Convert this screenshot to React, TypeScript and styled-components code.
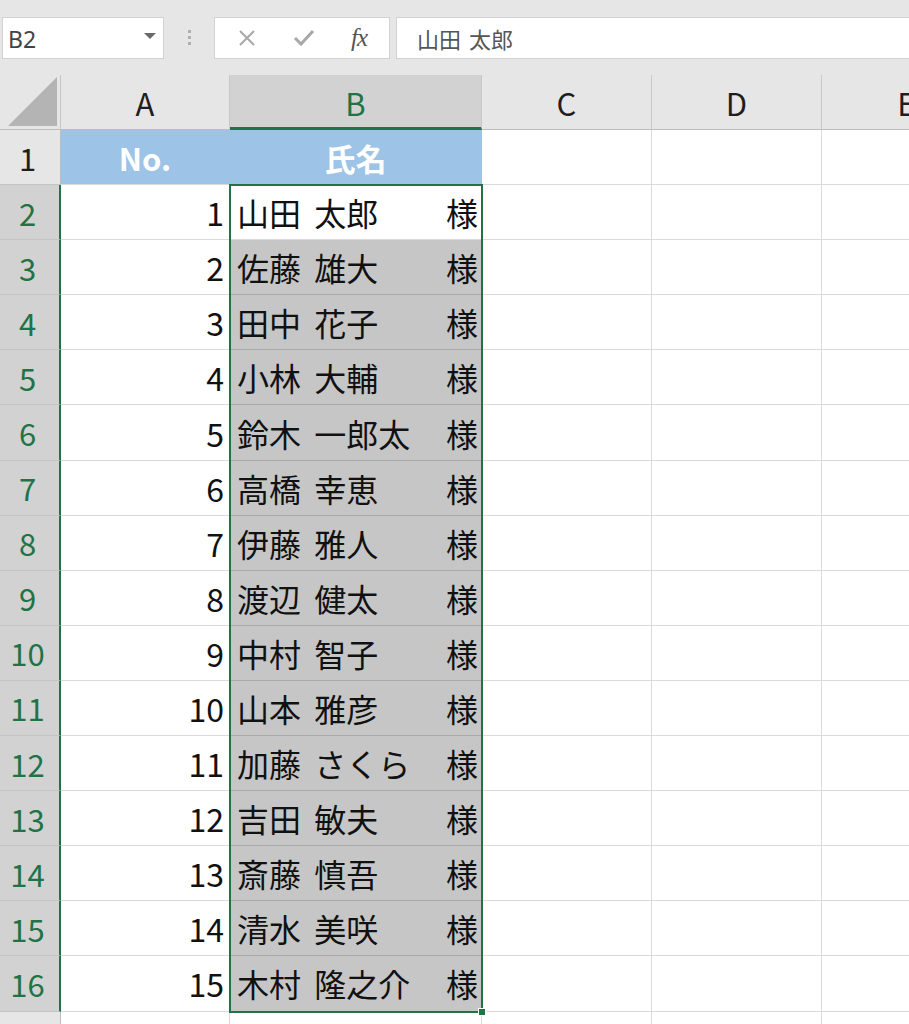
import styled, { createGlobalStyle } from "styled-components";

const GREEN = "#217346";
const FONT = `"Noto Sans CJK JP", "Noto Sans", sans-serif`;
const ROW_H = 55.1;
const HEAD_H = 55;

const names = [
    "山田 太郎",
    "佐藤 雄大",
    "田中 花子",
    "小林 大輔",
    "鈴木 一郎太",
    "高橋 幸恵",
    "伊藤 雅人",
    "渡辺 健太",
    "中村 智子",
    "山本 雅彦",
    "加藤 さくら",
    "吉田 敏夫",
    "斎藤 慎吾",
    "清水 美咲",
    "木村 隆之介",
];

const GlobalStyle = createGlobalStyle`
    html, body {
        margin:0;
        padding:0;
        background:#e6e6e6;
    }
    body {
        font-family:${FONT};
    }
`;

const Page = styled.div`
    width:909px;
    height:1024px;
    overflow:hidden;
    background:#e6e6e6;
`;

/* ---- formula bar ---- */
const Toolbar = styled.div`
    height:75px;
    display:flex;
    align-items:center;
    padding-left:2px;
    box-sizing:border-box;
`;
const NameBox = styled.div`
    width:162px;
    height:42px;
    box-sizing:border-box;
    background:#fff;
    border:1px solid #d2d2d2;
    display:flex;
    align-items:center;
    justify-content:space-between;
    padding:2px 7px 0 5px;
    font-family:"Noto Sans", "Open Sans", sans-serif;
    font-size:23px;
    color:#444;
`;
const Caret = styled.span`
    width:0;
    height:0;
    border-left:6px solid transparent;
    border-right:6px solid transparent;
    border-top:6px solid #6a6a6a;
    margin-top:-6px;
`;
const Grip = styled.div`
    width:50px;
    display:flex;
    flex-direction:column;
    align-items:center;
    gap:3px;
    span {
        width:3px;
        height:3px;
        background:#b0b0b0;
    }
`;
const ButtonBox = styled.div`
    width:176px;
    height:42px;
    box-sizing:border-box;
    background:#fff;
    border:1px solid #d2d2d2;
    display:flex;
    align-items:center;
    justify-content:space-around;
    padding:0 4px;
`;
const Fx = styled.span`
    font-family:"Liberation Serif", serif;
    font-style:italic;
    font-size:25px;
    color:#555;
    letter-spacing:-1px;
`;
const FormulaBox = styled.div`
    flex:1;
    height:42px;
    margin-left:6px;
    margin-right:-4px;
    box-sizing:border-box;
    background:#fff;
    border:1px solid #d2d2d2;
    display:flex;
    align-items:center;
    padding-left:20px;
    font-size:22px;
    color:#555;
    word-spacing:3px;
`;

/* ---- sheet ---- */
const Sheet = styled.div`
    position:relative;
    display:grid;
    grid-template-columns:61px 169px 252px 170px 170px 170px;
    grid-template-rows:${HEAD_H}px;
    grid-auto-rows:${ROW_H}px;
    width:992px;
    background:#fff;
    font-family:${FONT};
`;
const Corner = styled.div`
    background:#e6e6e6;
    border-right:1px solid #c6c6c6;
    border-bottom:1px solid #bdbdbd;
    box-sizing:border-box;
    display:flex;
    align-items:flex-end;
    justify-content:flex-end;
    padding:0 2px 2px 0;
`;
const ColHead = styled.div<{ $selected?: boolean }>`
    box-sizing:border-box;
    background:${(p) => (p.$selected ? "#d2d2d2" : "#e6e6e6")};
    color:${(p) => (p.$selected ? GREEN : "#1e1e1e")};
    border-right:1px solid #c8c8c8;
    border-bottom:${(p) => (p.$selected ? `3px solid ${GREEN}` : "1px solid #bdbdbd")};
    display:flex;
    align-items:center;
    justify-content:center;
    font-size:31px;
    padding-top:${(p) => (p.$selected ? "2px" : "0")};
`;
const RowHead = styled.div<{ $selected?: boolean }>`
    box-sizing:border-box;
    background:${(p) => (p.$selected ? "#d2d2d2" : "#e6e6e6")};
    color:${(p) => (p.$selected ? GREEN : "#1e1e1e")};
    border-right:${(p) => (p.$selected ? `2px solid ${GREEN}` : "1px solid #bdbdbd")};
    border-bottom:1px solid #c4c4c4;
    display:flex;
    align-items:center;
    justify-content:center;
    padding-right:${(p) => (p.$selected ? "4px" : "5px")};
    font-size:31px;
`;
const TitleCell = styled.div`
    box-sizing:border-box;
    background:#9dc3e6;
    border-right:1px solid #9dc3e6;
    border-bottom:1px solid #dadada;
    color:#fff;
    font-weight:700;
    font-size:31px;
    display:flex;
    align-items:center;
    justify-content:center;
`;
const NumCell = styled.div`
    box-sizing:border-box;
    border-right:1px solid #dadada;
    border-bottom:1px solid #dadada;
    display:flex;
    align-items:center;
    justify-content:flex-end;
    padding-right:5px;
    font-size:32px;
    color:#111;
`;
const NameCell = styled.div<{ $selected?: boolean }>`
    box-sizing:border-box;
    background:${(p) => (p.$selected ? "#c6c6c6" : "#fff")};
    border-right:1px solid #dadada;
    border-bottom:1px solid ${(p) => (p.$selected ? "#a9a9a9" : "#dadada")};
    display:flex;
    align-items:center;
    justify-content:space-between;
    padding:0 3px 0 7px;
    font-size:32px;
    color:#111;
    word-spacing:6px;
    white-space:nowrap;
`;
const Cell = styled.div`
    box-sizing:border-box;
    border-right:1px solid #dadada;
    border-bottom:1px solid #dadada;
`;
const Selection = styled.div`
    position:absolute;
    left:229px;
    top:${HEAD_H + ROW_H - 1}px;
    width:254px;
    height:${ROW_H * 15 + 2}px;
    box-sizing:border-box;
    border:2px solid ${GREEN};
    pointer-events:none;
`;
const FillHandle = styled.div`
    position:absolute;
    right:-5px;
    bottom:-5px;
    width:8px;
    height:8px;
    box-sizing:border-box;
    background:${GREEN};
    border:1px solid #fff;
`;

const App = () => {
    return (
        <Page>
            <GlobalStyle />
            <Toolbar>
                <NameBox>
                    <span>B2</span>
                    <Caret />
                </NameBox>
                <Grip>
                    <span />
                    <span />
                    <span />
                </Grip>
                <ButtonBox>
                    <svg width="20" height="20" viewBox="0 0 20 20">
                        <path d="M3 3 L17 17 M17 3 L3 17" stroke="#a8a8a8" strokeWidth="2" fill="none" />
                    </svg>
                    <svg width="22" height="20" viewBox="0 0 22 20">
                        <path d="M2 10 L8 16 L20 3" stroke="#a8a8a8" strokeWidth="3" fill="none" />
                    </svg>
                    <Fx>fx</Fx>
                </ButtonBox>
                <FormulaBox>山田 太郎</FormulaBox>
            </Toolbar>

            <Sheet>
                <Corner>
                    <svg width="50" height="50" viewBox="0 0 50 50">
                        <polygon points="0,49 49,49 49,0" fill="#b4b4b4" />
                    </svg>
                </Corner>
                {["A", "B", "C", "D", "E"].map((c) => (
                    <ColHead key={c} $selected={c === "B"}>{c}</ColHead>
                ))}

                <RowHead>1</RowHead>
                <TitleCell>No.</TitleCell>
                <TitleCell>氏名</TitleCell>
                <Cell />
                <Cell />
                <Cell />

                {names.map((n, i) => (
                    <Row key={n} index={i} name={n} />
                ))}

                {/* row 17: only its top edge shows */}
                <RowHead />
                <Cell />
                <Cell />
                <Cell />
                <Cell />
                <Cell />

                <Selection>
                    <FillHandle />
                </Selection>
            </Sheet>
        </Page>
    );
};

const Row = ({ index, name }: { index: number; name: string }) => (
    <>
        <RowHead $selected>{index + 2}</RowHead>
        <NumCell>{index + 1}</NumCell>
        <NameCell $selected={index > 0}>
            <span>{name}</span>
            <span>様</span>
        </NameCell>
        <Cell />
        <Cell />
        <Cell />
    </>
);

export default App;
